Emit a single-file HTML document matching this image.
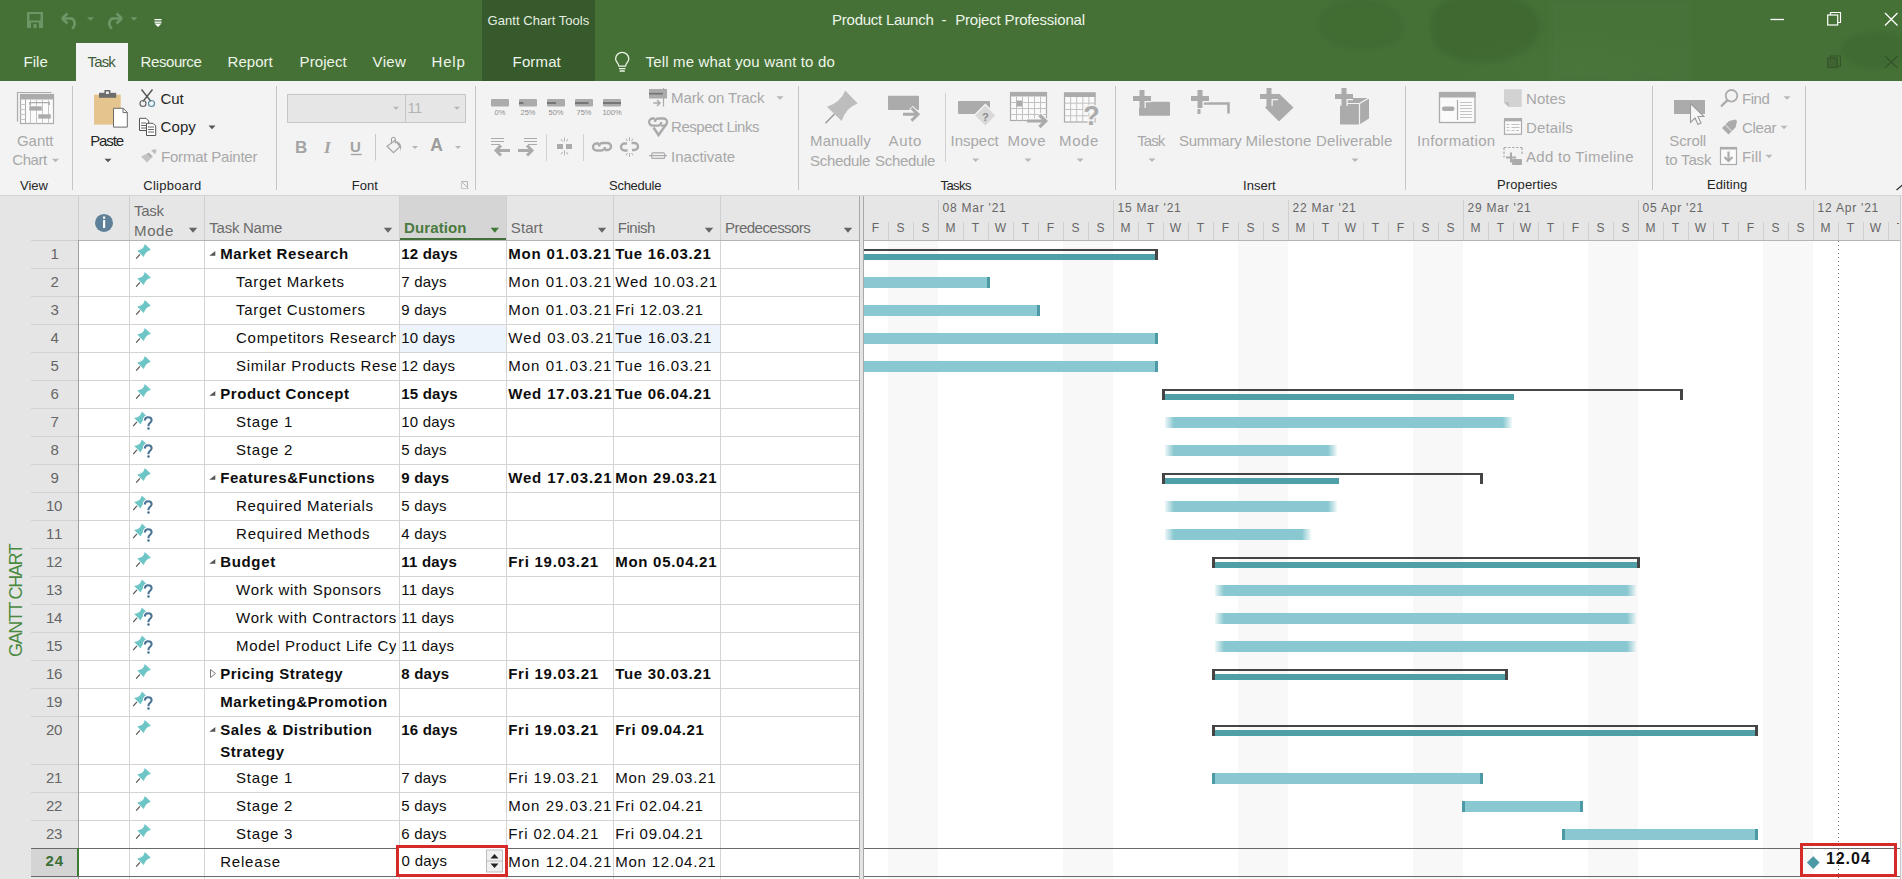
<!DOCTYPE html>
<html><head><meta charset="utf-8"><style>
html,body{margin:0;padding:0;}
body{width:1902px;height:879px;overflow:hidden;position:relative;background:#fff;font-family:'Liberation Sans', sans-serif;}
.t{position:absolute;white-space:pre;}
svg{position:absolute;overflow:visible;}
</style></head><body>
<div style="position:absolute;left:0px;top:0px;width:1902px;height:81px;background:#457136;"></div>
<div style="position:absolute;left:1319px;top:0px;width:84px;height:48px;border-radius:45% 50% 40% 45%;background:rgba(45,85,35,0.17);filter:blur(2px)"></div>
<div style="position:absolute;left:1431px;top:-6px;width:108px;height:68px;border-radius:40% 45% 50% 45%;background:rgba(45,85,35,0.26);filter:blur(2px)"></div>
<div style="position:absolute;left:1551px;top:0px;width:140px;height:81px;background:rgba(120,160,100,0.06);filter:blur(3px)"></div>
<div style="position:absolute;left:1842px;top:32px;width:70px;height:36px;border-radius:50%;background:rgba(45,85,35,0.2);filter:blur(2px)"></div>
<div style="position:absolute;left:1280px;top:0px;width:622px;height:81px;background:radial-gradient(ellipse 200px 60px at 300px 70px, rgba(110,150,90,0.08), transparent 70%)"></div>
<div style="position:absolute;left:482px;top:0px;width:113px;height:81px;background:#365a2c;"></div>
<div style="position:absolute;left:76px;top:43px;width:52px;height:38px;background:#f3f3f3;"></div>
<div style="position:absolute;left:0px;top:81px;width:1902px;height:114px;background:#f3f3f3;"></div>
<div style="position:absolute;left:0px;top:195px;width:1902px;height:1px;background:#d4d4d4;"></div>
<div style="position:absolute;left:72px;top:86px;width:1px;height:104px;background:#c6c6c6;"></div>
<div style="position:absolute;left:276px;top:86px;width:1px;height:104px;background:#c6c6c6;"></div>
<div style="position:absolute;left:475px;top:86px;width:1px;height:104px;background:#c6c6c6;"></div>
<div style="position:absolute;left:798px;top:86px;width:1px;height:104px;background:#c6c6c6;"></div>
<div style="position:absolute;left:1115px;top:86px;width:1px;height:104px;background:#c6c6c6;"></div>
<div style="position:absolute;left:1405px;top:86px;width:1px;height:104px;background:#c6c6c6;"></div>
<div style="position:absolute;left:1652px;top:86px;width:1px;height:104px;background:#c6c6c6;"></div>
<div style="position:absolute;left:1805px;top:86px;width:1px;height:104px;background:#c6c6c6;"></div>
<div style="position:absolute;left:945px;top:93px;width:1px;height:69px;background:#d0d0d0;"></div>
<div style="position:absolute;left:0px;top:196px;width:1902px;height:683px;background:#e5e5e5;"></div>
<div style="position:absolute;left:78px;top:196px;width:782px;height:44px;background:#e6e6e6;"></div>
<div style="position:absolute;left:399px;top:196px;width:107px;height:44px;background:#d5d5d5;"></div>
<div style="position:absolute;left:399px;top:238px;width:107px;height:2px;background:#41703a;"></div>
<div style="position:absolute;left:864px;top:196px;width:1036px;height:44px;background:#e6e6e6;"></div>
<div style="position:absolute;left:79px;top:240px;width:780px;height:639px;background:#ffffff;"></div>
<div style="position:absolute;left:864px;top:240px;width:1036px;height:639px;background:#ffffff;"></div>
<div style="position:absolute;left:859px;top:196px;width:5px;height:683px;background:#e4e4e4;"></div>
<div style="position:absolute;left:859px;top:196px;width:1px;height:683px;background:#a8a8a8;"></div>
<div style="position:absolute;left:863px;top:196px;width:1px;height:683px;background:#a8a8a8;"></div>
<div style="position:absolute;left:1900px;top:196px;width:2px;height:683px;background:#f0f0f0;"></div>
<div style="position:absolute;left:1900px;top:196px;width:1px;height:683px;background:#c8c8c8;"></div>
<div style="position:absolute;left:31px;top:240px;width:47px;height:1px;background:#d0d0d0;"></div>
<div style="position:absolute;left:78px;top:240px;width:781px;height:1px;background:#b4b4b4;"></div>
<div style="position:absolute;left:864px;top:240px;width:1036px;height:1px;background:#b4b4b4;"></div>
<div style="position:absolute;left:888px;top:241px;width:50px;height:638px;background:#f8f8f8;"></div>
<div style="position:absolute;left:1063px;top:241px;width:50px;height:638px;background:#f8f8f8;"></div>
<div style="position:absolute;left:1238px;top:241px;width:50px;height:638px;background:#f8f8f8;"></div>
<div style="position:absolute;left:1413px;top:241px;width:50px;height:638px;background:#f8f8f8;"></div>
<div style="position:absolute;left:1588px;top:241px;width:50px;height:638px;background:#f8f8f8;"></div>
<div style="position:absolute;left:1763px;top:241px;width:50px;height:638px;background:#f8f8f8;"></div>
<div style="position:absolute;left:400px;top:325px;width:106px;height:27px;background:#eef4fb;"></div>
<div style="position:absolute;left:614px;top:325px;width:106px;height:27px;background:#eef4fb;"></div>
<div style="position:absolute;left:78px;top:196px;width:1px;height:44px;background:#cfcfcf;"></div>
<div style="position:absolute;left:129px;top:196px;width:1px;height:44px;background:#cfcfcf;"></div>
<div style="position:absolute;left:204px;top:196px;width:1px;height:44px;background:#cfcfcf;"></div>
<div style="position:absolute;left:399px;top:196px;width:1px;height:44px;background:#cfcfcf;"></div>
<div style="position:absolute;left:506px;top:196px;width:1px;height:44px;background:#cfcfcf;"></div>
<div style="position:absolute;left:613px;top:196px;width:1px;height:44px;background:#cfcfcf;"></div>
<div style="position:absolute;left:720px;top:196px;width:1px;height:44px;background:#cfcfcf;"></div>
<div style="position:absolute;left:78px;top:240px;width:1px;height:639px;background:#a0a0a0;"></div>
<div style="position:absolute;left:129px;top:241px;width:1px;height:638px;background:#d4d4d4;"></div>
<div style="position:absolute;left:204px;top:241px;width:1px;height:638px;background:#d4d4d4;"></div>
<div style="position:absolute;left:399px;top:241px;width:1px;height:638px;background:#d4d4d4;"></div>
<div style="position:absolute;left:506px;top:241px;width:1px;height:638px;background:#d4d4d4;"></div>
<div style="position:absolute;left:613px;top:241px;width:1px;height:638px;background:#d4d4d4;"></div>
<div style="position:absolute;left:720px;top:241px;width:1px;height:638px;background:#d4d4d4;"></div>
<div style="position:absolute;left:31px;top:268px;width:47px;height:1px;background:#d2d2d2;"></div>
<div style="position:absolute;left:79px;top:268px;width:780px;height:1px;background:#d4d4d4;"></div>
<div style="position:absolute;left:31px;top:296px;width:47px;height:1px;background:#d2d2d2;"></div>
<div style="position:absolute;left:79px;top:296px;width:780px;height:1px;background:#d4d4d4;"></div>
<div style="position:absolute;left:31px;top:324px;width:47px;height:1px;background:#d2d2d2;"></div>
<div style="position:absolute;left:79px;top:324px;width:780px;height:1px;background:#d4d4d4;"></div>
<div style="position:absolute;left:31px;top:352px;width:47px;height:1px;background:#d2d2d2;"></div>
<div style="position:absolute;left:79px;top:352px;width:780px;height:1px;background:#d4d4d4;"></div>
<div style="position:absolute;left:31px;top:380px;width:47px;height:1px;background:#d2d2d2;"></div>
<div style="position:absolute;left:79px;top:380px;width:780px;height:1px;background:#d4d4d4;"></div>
<div style="position:absolute;left:31px;top:408px;width:47px;height:1px;background:#d2d2d2;"></div>
<div style="position:absolute;left:79px;top:408px;width:780px;height:1px;background:#d4d4d4;"></div>
<div style="position:absolute;left:31px;top:436px;width:47px;height:1px;background:#d2d2d2;"></div>
<div style="position:absolute;left:79px;top:436px;width:780px;height:1px;background:#d4d4d4;"></div>
<div style="position:absolute;left:31px;top:464px;width:47px;height:1px;background:#d2d2d2;"></div>
<div style="position:absolute;left:79px;top:464px;width:780px;height:1px;background:#d4d4d4;"></div>
<div style="position:absolute;left:31px;top:492px;width:47px;height:1px;background:#d2d2d2;"></div>
<div style="position:absolute;left:79px;top:492px;width:780px;height:1px;background:#d4d4d4;"></div>
<div style="position:absolute;left:31px;top:520px;width:47px;height:1px;background:#d2d2d2;"></div>
<div style="position:absolute;left:79px;top:520px;width:780px;height:1px;background:#d4d4d4;"></div>
<div style="position:absolute;left:31px;top:548px;width:47px;height:1px;background:#d2d2d2;"></div>
<div style="position:absolute;left:79px;top:548px;width:780px;height:1px;background:#d4d4d4;"></div>
<div style="position:absolute;left:31px;top:576px;width:47px;height:1px;background:#d2d2d2;"></div>
<div style="position:absolute;left:79px;top:576px;width:780px;height:1px;background:#d4d4d4;"></div>
<div style="position:absolute;left:31px;top:604px;width:47px;height:1px;background:#d2d2d2;"></div>
<div style="position:absolute;left:79px;top:604px;width:780px;height:1px;background:#d4d4d4;"></div>
<div style="position:absolute;left:31px;top:632px;width:47px;height:1px;background:#d2d2d2;"></div>
<div style="position:absolute;left:79px;top:632px;width:780px;height:1px;background:#d4d4d4;"></div>
<div style="position:absolute;left:31px;top:660px;width:47px;height:1px;background:#d2d2d2;"></div>
<div style="position:absolute;left:79px;top:660px;width:780px;height:1px;background:#d4d4d4;"></div>
<div style="position:absolute;left:31px;top:688px;width:47px;height:1px;background:#d2d2d2;"></div>
<div style="position:absolute;left:79px;top:688px;width:780px;height:1px;background:#d4d4d4;"></div>
<div style="position:absolute;left:31px;top:716px;width:47px;height:1px;background:#d2d2d2;"></div>
<div style="position:absolute;left:79px;top:716px;width:780px;height:1px;background:#d4d4d4;"></div>
<div style="position:absolute;left:31px;top:764px;width:47px;height:1px;background:#d2d2d2;"></div>
<div style="position:absolute;left:79px;top:764px;width:780px;height:1px;background:#d4d4d4;"></div>
<div style="position:absolute;left:31px;top:792px;width:47px;height:1px;background:#d2d2d2;"></div>
<div style="position:absolute;left:79px;top:792px;width:780px;height:1px;background:#d4d4d4;"></div>
<div style="position:absolute;left:31px;top:820px;width:47px;height:1px;background:#d2d2d2;"></div>
<div style="position:absolute;left:79px;top:820px;width:780px;height:1px;background:#d4d4d4;"></div>
<div style="position:absolute;left:31px;top:848px;width:47px;height:1px;background:#d2d2d2;"></div>
<div style="position:absolute;left:79px;top:848px;width:780px;height:1px;background:#d4d4d4;"></div>
<div style="position:absolute;left:31px;top:876px;width:47px;height:1px;background:#d2d2d2;"></div>
<div style="position:absolute;left:79px;top:876px;width:780px;height:1px;background:#d4d4d4;"></div>
<div style="position:absolute;left:888px;top:222px;width:1px;height:18px;background:#d0d0d0;"></div>
<div style="position:absolute;left:913px;top:222px;width:1px;height:18px;background:#d0d0d0;"></div>
<div style="position:absolute;left:938px;top:200px;width:1px;height:40px;background:#d0d0d0;"></div>
<div style="position:absolute;left:963px;top:222px;width:1px;height:18px;background:#d0d0d0;"></div>
<div style="position:absolute;left:988px;top:222px;width:1px;height:18px;background:#d0d0d0;"></div>
<div style="position:absolute;left:1013px;top:222px;width:1px;height:18px;background:#d0d0d0;"></div>
<div style="position:absolute;left:1038px;top:222px;width:1px;height:18px;background:#d0d0d0;"></div>
<div style="position:absolute;left:1063px;top:222px;width:1px;height:18px;background:#d0d0d0;"></div>
<div style="position:absolute;left:1088px;top:222px;width:1px;height:18px;background:#d0d0d0;"></div>
<div style="position:absolute;left:1113px;top:200px;width:1px;height:40px;background:#d0d0d0;"></div>
<div style="position:absolute;left:1138px;top:222px;width:1px;height:18px;background:#d0d0d0;"></div>
<div style="position:absolute;left:1163px;top:222px;width:1px;height:18px;background:#d0d0d0;"></div>
<div style="position:absolute;left:1188px;top:222px;width:1px;height:18px;background:#d0d0d0;"></div>
<div style="position:absolute;left:1213px;top:222px;width:1px;height:18px;background:#d0d0d0;"></div>
<div style="position:absolute;left:1238px;top:222px;width:1px;height:18px;background:#d0d0d0;"></div>
<div style="position:absolute;left:1263px;top:222px;width:1px;height:18px;background:#d0d0d0;"></div>
<div style="position:absolute;left:1288px;top:200px;width:1px;height:40px;background:#d0d0d0;"></div>
<div style="position:absolute;left:1313px;top:222px;width:1px;height:18px;background:#d0d0d0;"></div>
<div style="position:absolute;left:1338px;top:222px;width:1px;height:18px;background:#d0d0d0;"></div>
<div style="position:absolute;left:1363px;top:222px;width:1px;height:18px;background:#d0d0d0;"></div>
<div style="position:absolute;left:1388px;top:222px;width:1px;height:18px;background:#d0d0d0;"></div>
<div style="position:absolute;left:1413px;top:222px;width:1px;height:18px;background:#d0d0d0;"></div>
<div style="position:absolute;left:1438px;top:222px;width:1px;height:18px;background:#d0d0d0;"></div>
<div style="position:absolute;left:1463px;top:200px;width:1px;height:40px;background:#d0d0d0;"></div>
<div style="position:absolute;left:1488px;top:222px;width:1px;height:18px;background:#d0d0d0;"></div>
<div style="position:absolute;left:1513px;top:222px;width:1px;height:18px;background:#d0d0d0;"></div>
<div style="position:absolute;left:1538px;top:222px;width:1px;height:18px;background:#d0d0d0;"></div>
<div style="position:absolute;left:1563px;top:222px;width:1px;height:18px;background:#d0d0d0;"></div>
<div style="position:absolute;left:1588px;top:222px;width:1px;height:18px;background:#d0d0d0;"></div>
<div style="position:absolute;left:1613px;top:222px;width:1px;height:18px;background:#d0d0d0;"></div>
<div style="position:absolute;left:1638px;top:200px;width:1px;height:40px;background:#d0d0d0;"></div>
<div style="position:absolute;left:1663px;top:222px;width:1px;height:18px;background:#d0d0d0;"></div>
<div style="position:absolute;left:1688px;top:222px;width:1px;height:18px;background:#d0d0d0;"></div>
<div style="position:absolute;left:1713px;top:222px;width:1px;height:18px;background:#d0d0d0;"></div>
<div style="position:absolute;left:1738px;top:222px;width:1px;height:18px;background:#d0d0d0;"></div>
<div style="position:absolute;left:1763px;top:222px;width:1px;height:18px;background:#d0d0d0;"></div>
<div style="position:absolute;left:1788px;top:222px;width:1px;height:18px;background:#d0d0d0;"></div>
<div style="position:absolute;left:1813px;top:200px;width:1px;height:40px;background:#d0d0d0;"></div>
<div style="position:absolute;left:1838px;top:222px;width:1px;height:18px;background:#d0d0d0;"></div>
<div style="position:absolute;left:1863px;top:222px;width:1px;height:18px;background:#d0d0d0;"></div>
<div style="position:absolute;left:1888px;top:222px;width:1px;height:18px;background:#d0d0d0;"></div>
<div class="t" style="left:863px;top:220px;width:25px;text-align:center;font-size:12px;line-height:16px;color:#666666;">F</div>
<div class="t" style="left:888px;top:220px;width:25px;text-align:center;font-size:12px;line-height:16px;color:#666666;">S</div>
<div class="t" style="left:913px;top:220px;width:25px;text-align:center;font-size:12px;line-height:16px;color:#666666;">S</div>
<div class="t" style="left:938px;top:220px;width:25px;text-align:center;font-size:12px;line-height:16px;color:#666666;">M</div>
<div class="t" style="left:963px;top:220px;width:25px;text-align:center;font-size:12px;line-height:16px;color:#666666;">T</div>
<div class="t" style="left:988px;top:220px;width:25px;text-align:center;font-size:12px;line-height:16px;color:#666666;">W</div>
<div class="t" style="left:1013px;top:220px;width:25px;text-align:center;font-size:12px;line-height:16px;color:#666666;">T</div>
<div class="t" style="left:1038px;top:220px;width:25px;text-align:center;font-size:12px;line-height:16px;color:#666666;">F</div>
<div class="t" style="left:1063px;top:220px;width:25px;text-align:center;font-size:12px;line-height:16px;color:#666666;">S</div>
<div class="t" style="left:1088px;top:220px;width:25px;text-align:center;font-size:12px;line-height:16px;color:#666666;">S</div>
<div class="t" style="left:1113px;top:220px;width:25px;text-align:center;font-size:12px;line-height:16px;color:#666666;">M</div>
<div class="t" style="left:1138px;top:220px;width:25px;text-align:center;font-size:12px;line-height:16px;color:#666666;">T</div>
<div class="t" style="left:1163px;top:220px;width:25px;text-align:center;font-size:12px;line-height:16px;color:#666666;">W</div>
<div class="t" style="left:1188px;top:220px;width:25px;text-align:center;font-size:12px;line-height:16px;color:#666666;">T</div>
<div class="t" style="left:1213px;top:220px;width:25px;text-align:center;font-size:12px;line-height:16px;color:#666666;">F</div>
<div class="t" style="left:1238px;top:220px;width:25px;text-align:center;font-size:12px;line-height:16px;color:#666666;">S</div>
<div class="t" style="left:1263px;top:220px;width:25px;text-align:center;font-size:12px;line-height:16px;color:#666666;">S</div>
<div class="t" style="left:1288px;top:220px;width:25px;text-align:center;font-size:12px;line-height:16px;color:#666666;">M</div>
<div class="t" style="left:1313px;top:220px;width:25px;text-align:center;font-size:12px;line-height:16px;color:#666666;">T</div>
<div class="t" style="left:1338px;top:220px;width:25px;text-align:center;font-size:12px;line-height:16px;color:#666666;">W</div>
<div class="t" style="left:1363px;top:220px;width:25px;text-align:center;font-size:12px;line-height:16px;color:#666666;">T</div>
<div class="t" style="left:1388px;top:220px;width:25px;text-align:center;font-size:12px;line-height:16px;color:#666666;">F</div>
<div class="t" style="left:1413px;top:220px;width:25px;text-align:center;font-size:12px;line-height:16px;color:#666666;">S</div>
<div class="t" style="left:1438px;top:220px;width:25px;text-align:center;font-size:12px;line-height:16px;color:#666666;">S</div>
<div class="t" style="left:1463px;top:220px;width:25px;text-align:center;font-size:12px;line-height:16px;color:#666666;">M</div>
<div class="t" style="left:1488px;top:220px;width:25px;text-align:center;font-size:12px;line-height:16px;color:#666666;">T</div>
<div class="t" style="left:1513px;top:220px;width:25px;text-align:center;font-size:12px;line-height:16px;color:#666666;">W</div>
<div class="t" style="left:1538px;top:220px;width:25px;text-align:center;font-size:12px;line-height:16px;color:#666666;">T</div>
<div class="t" style="left:1563px;top:220px;width:25px;text-align:center;font-size:12px;line-height:16px;color:#666666;">F</div>
<div class="t" style="left:1588px;top:220px;width:25px;text-align:center;font-size:12px;line-height:16px;color:#666666;">S</div>
<div class="t" style="left:1613px;top:220px;width:25px;text-align:center;font-size:12px;line-height:16px;color:#666666;">S</div>
<div class="t" style="left:1638px;top:220px;width:25px;text-align:center;font-size:12px;line-height:16px;color:#666666;">M</div>
<div class="t" style="left:1663px;top:220px;width:25px;text-align:center;font-size:12px;line-height:16px;color:#666666;">T</div>
<div class="t" style="left:1688px;top:220px;width:25px;text-align:center;font-size:12px;line-height:16px;color:#666666;">W</div>
<div class="t" style="left:1713px;top:220px;width:25px;text-align:center;font-size:12px;line-height:16px;color:#666666;">T</div>
<div class="t" style="left:1738px;top:220px;width:25px;text-align:center;font-size:12px;line-height:16px;color:#666666;">F</div>
<div class="t" style="left:1763px;top:220px;width:25px;text-align:center;font-size:12px;line-height:16px;color:#666666;">S</div>
<div class="t" style="left:1788px;top:220px;width:25px;text-align:center;font-size:12px;line-height:16px;color:#666666;">S</div>
<div class="t" style="left:1813px;top:220px;width:25px;text-align:center;font-size:12px;line-height:16px;color:#666666;">M</div>
<div class="t" style="left:1838px;top:220px;width:25px;text-align:center;font-size:12px;line-height:16px;color:#666666;">T</div>
<div class="t" style="left:1863px;top:220px;width:25px;text-align:center;font-size:12px;line-height:16px;color:#666666;">W</div>
<div class="t" style="left:1888px;top:220px;width:25px;text-align:center;font-size:12px;line-height:16px;color:#666666;clip-path:inset(0 14px 0 0);">T</div>
<div style="position:absolute;left:31px;top:848px;width:47px;height:28px;background:#d4d4d4;"></div>
<div style="position:absolute;left:31px;top:848px;width:1869px;height:1px;background:#6a6a6a;"></div>
<div style="position:absolute;left:31px;top:876px;width:1869px;height:1px;background:#6a6a6a;"></div>
<div style="position:absolute;left:77px;top:848px;width:2px;height:28px;background:#3d7a34;"></div>
<div style="position:absolute;left:859px;top:848px;width:5px;height:29px;background:#e4e4e4;"></div>
<div style="position:absolute;left:859px;top:848px;width:1px;height:31px;background:#a8a8a8;"></div>
<div style="position:absolute;left:863px;top:848px;width:1px;height:31px;background:#a8a8a8;"></div>
<div style="position:absolute;left:864px;top:249px;width:294px;height:2px;background:#454545;"></div>
<div style="position:absolute;left:864px;top:254px;width:294px;height:6px;background:#4f9fa7;"></div>
<div style="position:absolute;left:1155px;top:249px;width:3px;height:11px;background:#454545;"></div>
<div style="position:absolute;left:864px;top:277px;width:126px;height:11px;background:#89c8d0;"></div>
<div style="position:absolute;left:987px;top:277px;width:3px;height:11px;background:#4d99a5;"></div>
<div style="position:absolute;left:864px;top:305px;width:176px;height:11px;background:#89c8d0;"></div>
<div style="position:absolute;left:1037px;top:305px;width:3px;height:11px;background:#4d99a5;"></div>
<div style="position:absolute;left:864px;top:333px;width:294px;height:11px;background:#89c8d0;"></div>
<div style="position:absolute;left:1155px;top:333px;width:3px;height:11px;background:#4d99a5;"></div>
<div style="position:absolute;left:864px;top:361px;width:294px;height:11px;background:#89c8d0;"></div>
<div style="position:absolute;left:1155px;top:361px;width:3px;height:11px;background:#4d99a5;"></div>
<div style="position:absolute;left:1162px;top:389px;width:521px;height:2px;background:#454545;"></div>
<div style="position:absolute;left:1162px;top:394px;width:352px;height:6px;background:#4f9fa7;"></div>
<div style="position:absolute;left:1162px;top:389px;width:3px;height:11px;background:#454545;"></div>
<div style="position:absolute;left:1680px;top:389px;width:3px;height:11px;background:#454545;"></div>
<div style="position:absolute;left:1165px;top:417px;width:347px;height:11px;background:linear-gradient(90deg, rgba(137,200,208,0.15) 0px, rgba(137,200,208,1) 9px, rgba(137,200,208,1) calc(100% - 9px), rgba(137,200,208,0.1) 100%);"></div>
<div style="position:absolute;left:1165px;top:445px;width:172px;height:11px;background:linear-gradient(90deg, rgba(137,200,208,0.15) 0px, rgba(137,200,208,1) 9px, rgba(137,200,208,1) calc(100% - 9px), rgba(137,200,208,0.1) 100%);"></div>
<div style="position:absolute;left:1162px;top:473px;width:321px;height:2px;background:#454545;"></div>
<div style="position:absolute;left:1162px;top:478px;width:177px;height:6px;background:#4f9fa7;"></div>
<div style="position:absolute;left:1162px;top:473px;width:3px;height:11px;background:#454545;"></div>
<div style="position:absolute;left:1480px;top:473px;width:3px;height:11px;background:#454545;"></div>
<div style="position:absolute;left:1165px;top:501px;width:172px;height:11px;background:linear-gradient(90deg, rgba(137,200,208,0.15) 0px, rgba(137,200,208,1) 9px, rgba(137,200,208,1) calc(100% - 9px), rgba(137,200,208,0.1) 100%);"></div>
<div style="position:absolute;left:1165px;top:529px;width:146px;height:11px;background:linear-gradient(90deg, rgba(137,200,208,0.15) 0px, rgba(137,200,208,1) 9px, rgba(137,200,208,1) calc(100% - 9px), rgba(137,200,208,0.1) 100%);"></div>
<div style="position:absolute;left:1212px;top:557px;width:428px;height:2px;background:#454545;"></div>
<div style="position:absolute;left:1212px;top:562px;width:428px;height:6px;background:#4f9fa7;"></div>
<div style="position:absolute;left:1212px;top:557px;width:3px;height:11px;background:#454545;"></div>
<div style="position:absolute;left:1637px;top:557px;width:3px;height:11px;background:#454545;"></div>
<div style="position:absolute;left:1215px;top:585px;width:421px;height:11px;background:linear-gradient(90deg, rgba(137,200,208,0.15) 0px, rgba(137,200,208,1) 9px, rgba(137,200,208,1) calc(100% - 9px), rgba(137,200,208,0.1) 100%);"></div>
<div style="position:absolute;left:1215px;top:613px;width:421px;height:11px;background:linear-gradient(90deg, rgba(137,200,208,0.15) 0px, rgba(137,200,208,1) 9px, rgba(137,200,208,1) calc(100% - 9px), rgba(137,200,208,0.1) 100%);"></div>
<div style="position:absolute;left:1215px;top:641px;width:421px;height:11px;background:linear-gradient(90deg, rgba(137,200,208,0.15) 0px, rgba(137,200,208,1) 9px, rgba(137,200,208,1) calc(100% - 9px), rgba(137,200,208,0.1) 100%);"></div>
<div style="position:absolute;left:1212px;top:669px;width:296px;height:2px;background:#454545;"></div>
<div style="position:absolute;left:1212px;top:674px;width:296px;height:6px;background:#4f9fa7;"></div>
<div style="position:absolute;left:1212px;top:669px;width:3px;height:11px;background:#454545;"></div>
<div style="position:absolute;left:1505px;top:669px;width:3px;height:11px;background:#454545;"></div>
<div style="position:absolute;left:1212px;top:725px;width:546px;height:2px;background:#454545;"></div>
<div style="position:absolute;left:1212px;top:730px;width:546px;height:6px;background:#4f9fa7;"></div>
<div style="position:absolute;left:1212px;top:725px;width:3px;height:11px;background:#454545;"></div>
<div style="position:absolute;left:1755px;top:725px;width:3px;height:11px;background:#454545;"></div>
<div style="position:absolute;left:1212px;top:773px;width:271px;height:11px;background:#89c8d0;"></div>
<div style="position:absolute;left:1212px;top:773px;width:3px;height:11px;background:#4d99a5;"></div>
<div style="position:absolute;left:1480px;top:773px;width:3px;height:11px;background:#4d99a5;"></div>
<div style="position:absolute;left:1462px;top:801px;width:121px;height:11px;background:#89c8d0;"></div>
<div style="position:absolute;left:1462px;top:801px;width:3px;height:11px;background:#4d99a5;"></div>
<div style="position:absolute;left:1580px;top:801px;width:3px;height:11px;background:#4d99a5;"></div>
<div style="position:absolute;left:1562px;top:829px;width:196px;height:11px;background:#89c8d0;"></div>
<div style="position:absolute;left:1562px;top:829px;width:3px;height:11px;background:#4d99a5;"></div>
<div style="position:absolute;left:1755px;top:829px;width:3px;height:11px;background:#4d99a5;"></div>
<div style="position:absolute;left:1838px;top:241px;width:1px;height:638px;background:repeating-linear-gradient(180deg,#555 0px,#555 1px,transparent 1px,transparent 4px);opacity:0.8"></div>
<div style="position:absolute;left:1809.2px;top:857.7px;width:8.5px;height:8.5px;background:#4d99a5;transform:rotate(45deg);"></div>
<div style="position:absolute;left:1800px;top:843px;width:91px;height:28px;border:3px solid #d42a2a;"></div>
<div style="position:absolute;left:396px;top:845px;width:106px;height:26px;border:3px solid #d42a2a;background:#fff"></div>
<svg style="left:0;top:0" width="1902" height="879" viewBox="0 0 1902 879"><g transform="translate(130 240)"><path d="M9.9 14.3L6.2 18.6" stroke="#555" stroke-width="1.2"/><path d="M14.8 4.1L20.9 9.7Q15.6 11.2 13.7 16.9L7.2 10.5Q13.6 9.8 14.8 4.1Z" fill="#6ec5c6"/></g><path d="M209.3 255.8L215.3 251V255.8Z" fill="#555"/><g transform="translate(130 268)"><path d="M9.9 14.3L6.2 18.6" stroke="#555" stroke-width="1.2"/><path d="M14.8 4.1L20.9 9.7Q15.6 11.2 13.7 16.9L7.2 10.5Q13.6 9.8 14.8 4.1Z" fill="#6ec5c6"/></g><g transform="translate(130 296)"><path d="M9.9 14.3L6.2 18.6" stroke="#555" stroke-width="1.2"/><path d="M14.8 4.1L20.9 9.7Q15.6 11.2 13.7 16.9L7.2 10.5Q13.6 9.8 14.8 4.1Z" fill="#6ec5c6"/></g><g transform="translate(130 324)"><path d="M9.9 14.3L6.2 18.6" stroke="#555" stroke-width="1.2"/><path d="M14.8 4.1L20.9 9.7Q15.6 11.2 13.7 16.9L7.2 10.5Q13.6 9.8 14.8 4.1Z" fill="#6ec5c6"/></g><g transform="translate(130 352)"><path d="M9.9 14.3L6.2 18.6" stroke="#555" stroke-width="1.2"/><path d="M14.8 4.1L20.9 9.7Q15.6 11.2 13.7 16.9L7.2 10.5Q13.6 9.8 14.8 4.1Z" fill="#6ec5c6"/></g><g transform="translate(130 380)"><path d="M9.9 14.3L6.2 18.6" stroke="#555" stroke-width="1.2"/><path d="M14.8 4.1L20.9 9.7Q15.6 11.2 13.7 16.9L7.2 10.5Q13.6 9.8 14.8 4.1Z" fill="#6ec5c6"/></g><path d="M209.3 395.8L215.3 391V395.8Z" fill="#555"/><g transform="translate(127 407.5)"><path d="M9.9 14.3L6.2 18.6" stroke="#555" stroke-width="1.2"/><path d="M14.8 4.1L20.9 9.7Q15.6 11.2 13.7 16.9L7.2 10.5Q13.6 9.8 14.8 4.1Z" fill="#6ec5c6"/></g><path d="M144.9 420.6C144.9 418.3 146.4 417.2 148.2 417.2C150.2 417.2 151.6 418.4 151.6 420.2C151.6 422.4 148.5 423 148.5 425.3V426.2" fill="none" stroke="#fff" stroke-width="4"/><path d="M144.9 420.6C144.9 418.3 146.4 417.2 148.2 417.2C150.2 417.2 151.6 418.4 151.6 420.2C151.6 422.4 148.5 423 148.5 425.3V426.2" fill="none" stroke="#4a7494" stroke-width="2.1"/><circle cx="148.5" cy="428.5" r="1.3" fill="#4a7494"/><g transform="translate(127 435.5)"><path d="M9.9 14.3L6.2 18.6" stroke="#555" stroke-width="1.2"/><path d="M14.8 4.1L20.9 9.7Q15.6 11.2 13.7 16.9L7.2 10.5Q13.6 9.8 14.8 4.1Z" fill="#6ec5c6"/></g><path d="M144.9 448.6C144.9 446.3 146.4 445.2 148.2 445.2C150.2 445.2 151.6 446.4 151.6 448.2C151.6 450.4 148.5 451 148.5 453.3V454.2" fill="none" stroke="#fff" stroke-width="4"/><path d="M144.9 448.6C144.9 446.3 146.4 445.2 148.2 445.2C150.2 445.2 151.6 446.4 151.6 448.2C151.6 450.4 148.5 451 148.5 453.3V454.2" fill="none" stroke="#4a7494" stroke-width="2.1"/><circle cx="148.5" cy="456.5" r="1.3" fill="#4a7494"/><g transform="translate(130 464)"><path d="M9.9 14.3L6.2 18.6" stroke="#555" stroke-width="1.2"/><path d="M14.8 4.1L20.9 9.7Q15.6 11.2 13.7 16.9L7.2 10.5Q13.6 9.8 14.8 4.1Z" fill="#6ec5c6"/></g><path d="M209.3 479.8L215.3 475V479.8Z" fill="#555"/><g transform="translate(127 491.5)"><path d="M9.9 14.3L6.2 18.6" stroke="#555" stroke-width="1.2"/><path d="M14.8 4.1L20.9 9.7Q15.6 11.2 13.7 16.9L7.2 10.5Q13.6 9.8 14.8 4.1Z" fill="#6ec5c6"/></g><path d="M144.9 504.6C144.9 502.3 146.4 501.2 148.2 501.2C150.2 501.2 151.6 502.4 151.6 504.2C151.6 506.4 148.5 507 148.5 509.3V510.2" fill="none" stroke="#fff" stroke-width="4"/><path d="M144.9 504.6C144.9 502.3 146.4 501.2 148.2 501.2C150.2 501.2 151.6 502.4 151.6 504.2C151.6 506.4 148.5 507 148.5 509.3V510.2" fill="none" stroke="#4a7494" stroke-width="2.1"/><circle cx="148.5" cy="512.5" r="1.3" fill="#4a7494"/><g transform="translate(127 519.5)"><path d="M9.9 14.3L6.2 18.6" stroke="#555" stroke-width="1.2"/><path d="M14.8 4.1L20.9 9.7Q15.6 11.2 13.7 16.9L7.2 10.5Q13.6 9.8 14.8 4.1Z" fill="#6ec5c6"/></g><path d="M144.9 532.6C144.9 530.3 146.4 529.2 148.2 529.2C150.2 529.2 151.6 530.4 151.6 532.2C151.6 534.4 148.5 535 148.5 537.3V538.2" fill="none" stroke="#fff" stroke-width="4"/><path d="M144.9 532.6C144.9 530.3 146.4 529.2 148.2 529.2C150.2 529.2 151.6 530.4 151.6 532.2C151.6 534.4 148.5 535 148.5 537.3V538.2" fill="none" stroke="#4a7494" stroke-width="2.1"/><circle cx="148.5" cy="540.5" r="1.3" fill="#4a7494"/><g transform="translate(130 548)"><path d="M9.9 14.3L6.2 18.6" stroke="#555" stroke-width="1.2"/><path d="M14.8 4.1L20.9 9.7Q15.6 11.2 13.7 16.9L7.2 10.5Q13.6 9.8 14.8 4.1Z" fill="#6ec5c6"/></g><path d="M209.3 563.8L215.3 559V563.8Z" fill="#555"/><g transform="translate(127 575.5)"><path d="M9.9 14.3L6.2 18.6" stroke="#555" stroke-width="1.2"/><path d="M14.8 4.1L20.9 9.7Q15.6 11.2 13.7 16.9L7.2 10.5Q13.6 9.8 14.8 4.1Z" fill="#6ec5c6"/></g><path d="M144.9 588.6C144.9 586.3 146.4 585.2 148.2 585.2C150.2 585.2 151.6 586.4 151.6 588.2C151.6 590.4 148.5 591 148.5 593.3V594.2" fill="none" stroke="#fff" stroke-width="4"/><path d="M144.9 588.6C144.9 586.3 146.4 585.2 148.2 585.2C150.2 585.2 151.6 586.4 151.6 588.2C151.6 590.4 148.5 591 148.5 593.3V594.2" fill="none" stroke="#4a7494" stroke-width="2.1"/><circle cx="148.5" cy="596.5" r="1.3" fill="#4a7494"/><g transform="translate(127 603.5)"><path d="M9.9 14.3L6.2 18.6" stroke="#555" stroke-width="1.2"/><path d="M14.8 4.1L20.9 9.7Q15.6 11.2 13.7 16.9L7.2 10.5Q13.6 9.8 14.8 4.1Z" fill="#6ec5c6"/></g><path d="M144.9 616.6C144.9 614.3 146.4 613.2 148.2 613.2C150.2 613.2 151.6 614.4 151.6 616.2C151.6 618.4 148.5 619 148.5 621.3V622.2" fill="none" stroke="#fff" stroke-width="4"/><path d="M144.9 616.6C144.9 614.3 146.4 613.2 148.2 613.2C150.2 613.2 151.6 614.4 151.6 616.2C151.6 618.4 148.5 619 148.5 621.3V622.2" fill="none" stroke="#4a7494" stroke-width="2.1"/><circle cx="148.5" cy="624.5" r="1.3" fill="#4a7494"/><g transform="translate(127 631.5)"><path d="M9.9 14.3L6.2 18.6" stroke="#555" stroke-width="1.2"/><path d="M14.8 4.1L20.9 9.7Q15.6 11.2 13.7 16.9L7.2 10.5Q13.6 9.8 14.8 4.1Z" fill="#6ec5c6"/></g><path d="M144.9 644.6C144.9 642.3 146.4 641.2 148.2 641.2C150.2 641.2 151.6 642.4 151.6 644.2C151.6 646.4 148.5 647 148.5 649.3V650.2" fill="none" stroke="#fff" stroke-width="4"/><path d="M144.9 644.6C144.9 642.3 146.4 641.2 148.2 641.2C150.2 641.2 151.6 642.4 151.6 644.2C151.6 646.4 148.5 647 148.5 649.3V650.2" fill="none" stroke="#4a7494" stroke-width="2.1"/><circle cx="148.5" cy="652.5" r="1.3" fill="#4a7494"/><g transform="translate(130 660)"><path d="M9.9 14.3L6.2 18.6" stroke="#555" stroke-width="1.2"/><path d="M14.8 4.1L20.9 9.7Q15.6 11.2 13.7 16.9L7.2 10.5Q13.6 9.8 14.8 4.1Z" fill="#6ec5c6"/></g><path d="M210.5 669.5L215.5 673.5L210.5 677.5Z" fill="none" stroke="#777" stroke-width="1"/><g transform="translate(127 687.5)"><path d="M9.9 14.3L6.2 18.6" stroke="#555" stroke-width="1.2"/><path d="M14.8 4.1L20.9 9.7Q15.6 11.2 13.7 16.9L7.2 10.5Q13.6 9.8 14.8 4.1Z" fill="#6ec5c6"/></g><path d="M144.9 700.6C144.9 698.3 146.4 697.2 148.2 697.2C150.2 697.2 151.6 698.4 151.6 700.2C151.6 702.4 148.5 703 148.5 705.3V706.2" fill="none" stroke="#fff" stroke-width="4"/><path d="M144.9 700.6C144.9 698.3 146.4 697.2 148.2 697.2C150.2 697.2 151.6 698.4 151.6 700.2C151.6 702.4 148.5 703 148.5 705.3V706.2" fill="none" stroke="#4a7494" stroke-width="2.1"/><circle cx="148.5" cy="708.5" r="1.3" fill="#4a7494"/><g transform="translate(130 716)"><path d="M9.9 14.3L6.2 18.6" stroke="#555" stroke-width="1.2"/><path d="M14.8 4.1L20.9 9.7Q15.6 11.2 13.7 16.9L7.2 10.5Q13.6 9.8 14.8 4.1Z" fill="#6ec5c6"/></g><path d="M209.3 731.8L215.3 727V731.8Z" fill="#555"/><g transform="translate(130 764)"><path d="M9.9 14.3L6.2 18.6" stroke="#555" stroke-width="1.2"/><path d="M14.8 4.1L20.9 9.7Q15.6 11.2 13.7 16.9L7.2 10.5Q13.6 9.8 14.8 4.1Z" fill="#6ec5c6"/></g><g transform="translate(130 792)"><path d="M9.9 14.3L6.2 18.6" stroke="#555" stroke-width="1.2"/><path d="M14.8 4.1L20.9 9.7Q15.6 11.2 13.7 16.9L7.2 10.5Q13.6 9.8 14.8 4.1Z" fill="#6ec5c6"/></g><g transform="translate(130 820)"><path d="M9.9 14.3L6.2 18.6" stroke="#555" stroke-width="1.2"/><path d="M14.8 4.1L20.9 9.7Q15.6 11.2 13.7 16.9L7.2 10.5Q13.6 9.8 14.8 4.1Z" fill="#6ec5c6"/></g><g transform="translate(130 848)"><path d="M9.9 14.3L6.2 18.6" stroke="#555" stroke-width="1.2"/><path d="M14.8 4.1L20.9 9.7Q15.6 11.2 13.7 16.9L7.2 10.5Q13.6 9.8 14.8 4.1Z" fill="#6ec5c6"/></g><circle cx="104" cy="222.9" r="9" fill="#5e8199"/><rect x="103" y="220" width="2.2" height="8" fill="#fff"/><rect x="103" y="216.5" width="2.2" height="2.2" fill="#fff"/><path d="M188.8 227.8h8.4l-4.2 5z" fill="#666"/><path d="M383.8 227.8h8.4l-4.2 5z" fill="#666"/><path d="M490.6 227.8h8.4l-4.2 5z" fill="#3f7a36"/><path d="M597.8 227.8h8.4l-4.2 5z" fill="#666"/><path d="M704.8 227.8h8.4l-4.2 5z" fill="#666"/><path d="M843.8 227.8h8.4l-4.2 5z" fill="#666"/><rect x="486.5" y="850" width="16" height="22" fill="#f0f0f0" stroke="#bdbdbd" stroke-width="1"/><path d="M487 861h15" stroke="#bdbdbd"/><path d="M490.5 858.5h8l-4 -4.5z" fill="#222"/><path d="M490.5 863.5h8l-4 4.5z" fill="#222"/></svg>
<div class="t" style="left:7px;top:657px;font-size:18px;line-height:18px;letter-spacing:-1.35px;color:#4a8a3f;transform:rotate(-90deg);transform-origin:0 0;">GANTT CHART</div>
<svg style="left:0;top:0" width="1902" height="200" viewBox="0 0 1902 200"><rect x="27" y="12" width="16" height="16" fill="#6e9565"/><rect x="29.5" y="14" width="11" height="6.5" fill="#457136"/><rect x="31" y="22.5" width="8" height="5.5" fill="#457136"/><rect x="33.5" y="24" width="3" height="4" fill="#6e9565"/><path d="M62 18.5 L67.5 13.5 M62 18.5 L67.5 23.5 M62.5 18.5 H72 A6 6 0 0 1 72 28.5" fill="none" stroke="#6e9565" stroke-width="2.6"/><path d="M122 18.5 L116.5 13.5 M122 18.5 L116.5 23.5 M121.5 18.5 H112 A6 6 0 0 0 112 28.5" fill="none" stroke="#6e9565" stroke-width="2.6"/><path d="M87.0 17.25h7l-3.5 3.5z" fill="#6e9565"/><path d="M130.5 17.25h7l-3.5 3.5z" fill="#6e9565"/><rect x="154.5" y="19" width="7" height="1.3" fill="#fff"/><rect x="154.5" y="21.5" width="7" height="1.3" fill="#fff"/><path d="M154.5 23.5h7l-3.5 3.5z" fill="#fff"/><path d="M618.9 66.2C618.9 63.3 615.6 61.8 615.6 58.9A6.6 6.6 0 0 1 628.8 58.9C628.8 61.8 625.5 63.3 625.5 66.2Z" fill="none" stroke="#eef5ea" stroke-width="1.3"/><path d="M619 68.6h6.4M619.6 71h5.2" stroke="#eef5ea" stroke-width="1.3"/><path d="M1770.5 19.5h13.5" stroke="#fff" stroke-width="1.3"/><rect x="1827.7" y="15" width="10" height="10" fill="none" stroke="#fff" stroke-width="1.2"/><path d="M1830.5 15V12.5h10v10H1837.7" fill="none" stroke="#fff" stroke-width="1.2"/><path d="M1885 13L1897.5 25.5M1897.5 13L1885 25.5" stroke="#fff" stroke-width="1.3"/><rect x="1827.7" y="58" width="9.5" height="9.5" fill="#3f6432" stroke="#35552b" stroke-width="1.2"/><path d="M1830.5 58V56h10v10H1837.2" fill="none" stroke="#35552b" stroke-width="1.2"/><path d="M1885 56L1897.5 68M1897.5 56L1885 68" stroke="#35552b" stroke-width="1.2"/><path d="M17.5 121.5V92.5H51.5" fill="none" stroke="#ababab" stroke-width="1.2"/><rect x="20.5" y="94.5" width="33" height="29" fill="#fbfbfb" stroke="#ababab" stroke-width="1.2"/><rect x="20" y="94" width="34" height="5.5" fill="#ababab"/><path d="M25.5 99.5V123.5" stroke="#c6c6c6" stroke-width="1"/><path d="M30.5 99.5V123.5" stroke="#c6c6c6" stroke-width="1"/><path d="M36.5 99.5V123.5" stroke="#c6c6c6" stroke-width="1"/><path d="M42.5 99.5V123.5" stroke="#c6c6c6" stroke-width="1"/><path d="M48.5 99.5V123.5" stroke="#c6c6c6" stroke-width="1"/><path d="M25.5 99.5V123.5" stroke="#ababab" stroke-width="1"/><path d="M20.5 104.5H25.5" stroke="#c6c6c6" stroke-width="1"/><path d="M20.5 109.5H25.5" stroke="#c6c6c6" stroke-width="1"/><path d="M20.5 114.5H25.5" stroke="#c6c6c6" stroke-width="1"/><path d="M20.5 119.5H25.5" stroke="#c6c6c6" stroke-width="1"/><path d="M29.8 105V102.7H49.3V105" fill="none" stroke="#ababab" stroke-width="1.3"/><rect x="29.3" y="106.3" width="12.5" height="4.3" fill="#ababab"/><rect x="38.3" y="114.3" width="12.5" height="4.3" fill="#ababab"/><path d="M52.0 158.75h7l-3.5 3.5z" fill="#b8b8b8"/><rect x="94" y="94.6" width="26.7" height="30" fill="#e5c48d"/><rect x="99" y="92.8" width="17.2" height="5" fill="#6d6d6d"/><rect x="104.4" y="90" width="6" height="5" fill="#6d6d6d"/><rect x="106" y="91.5" width="2.8" height="2.5" fill="#f3f3f3"/><path d="M113.5 108.3H123.2L127.3 112.4V127.1H113.5Z" fill="#fff" stroke="#6b6b6b" stroke-width="1"/><path d="M123 108.3V112.6H127.3" fill="none" stroke="#6b6b6b" stroke-width="1"/><path d="M104.5 158.7h7l-3.5 3.6z" fill="#555"/><path d="M141.5 89.5L151 101.5M152.5 89.5L143 101.5" stroke="#555" stroke-width="1.4"/><circle cx="143" cy="103.5" r="3" fill="none" stroke="#666" stroke-width="1.2"/><circle cx="151.5" cy="103.5" r="3" fill="none" stroke="#5a8fa8" stroke-width="1.2"/><path d="M139.5 118.3H146l2.7 2.7V130.5H139.5Z" fill="#fff" stroke="#555" stroke-width="1"/><path d="M141 123h5M141 125.5h5M141 128h5" stroke="#555" stroke-width="0.9"/><path d="M146.5 123.3H153l2.7 2.7V135.5H146.5Z" fill="#fff" stroke="#555" stroke-width="1"/><path d="M148 127h6M148 129.5h6M148 132h6" stroke="#555" stroke-width="0.9"/><path d="M208.5 125.60000000000001h7l-3.5 3.6z" fill="#555"/><path d="M151 150.5l4 -1.5 1.5 1.5 -1.5 4 z" fill="#bdbdbd"/><path d="M149 152.5l4 4 -6 6 -6 -6z" fill="#c4c4c4"/><path d="M148 153.5l3 3" stroke="#a8a8a8" stroke-width="1.5"/><rect x="287.5" y="94.5" width="178" height="28" fill="#e6e6e6" stroke="#c6c6c6" stroke-width="1"/><path d="M405.5 95V122" stroke="#c6c6c6" stroke-width="1"/><path d="M393.0 106.8h6l-3.0 3z" fill="#b6b6b6"/><path d="M454.0 106.8h6l-3.0 3z" fill="#b6b6b6"/><text x="295" y="153" font-family="Liberation Sans" font-weight="bold" font-size="17" fill="#a4a4a4">B</text><text x="324" y="153" font-family="Liberation Serif" font-weight="bold" font-style="italic" font-size="17.5" fill="#a4a4a4">I</text><text x="350" y="151.5" font-family="Liberation Sans" font-weight="bold" font-size="15" fill="#a4a4a4">U</text><path d="M350.8 154.5h11" stroke="#a4a4a4" stroke-width="1.3"/><path d="M375.5 134V160.5" stroke="#c8c8c8" stroke-width="1"/><path d="M387.1 146.2L395.1 140.3L400 146.5L393.5 152.6Z" fill="none" stroke="#a4a4a4" stroke-width="1.2"/><path d="M391.5 143.5V138.5Q393.5 136 395.3 138.5V143.5" fill="none" stroke="#a4a4a4" stroke-width="1.1"/><path d="M396.5 141Q402.5 143 400.8 151.5Q400.5 147 398.5 145Z" fill="#a4a4a4"/><path d="M412.0 146.1h6l-3.0 3z" fill="#b6b6b6"/><text x="430.2" y="150.7" font-family="Liberation Sans" font-weight="bold" font-size="17.5" fill="#9c9c9c">A</text><path d="M455.0 146.1h6l-3.0 3z" fill="#b6b6b6"/><path d="M461.5 181.5h6v6M462 182l6 6" fill="none" stroke="#b4b4b4" stroke-width="1"/><path d="M461.5 181.5v7h7" fill="none" stroke="#c8c8c8" stroke-width="1"/><rect x="491" y="99" width="18" height="7.6" rx="1" fill="#ababab"/><text x="500" y="115" text-anchor="middle" font-family="Liberation Sans" font-size="7.5" fill="#8e8e8e">0%</text><rect x="519" y="99" width="18" height="7.6" rx="1" fill="#ababab"/><rect x="519" y="102.1" width="4.5" height="1.8" fill="#707174"/><text x="528" y="115" text-anchor="middle" font-family="Liberation Sans" font-size="7.5" fill="#8e8e8e">25%</text><rect x="547" y="99" width="18" height="7.6" rx="1" fill="#ababab"/><rect x="547" y="102.1" width="9.0" height="1.8" fill="#707174"/><text x="556" y="115" text-anchor="middle" font-family="Liberation Sans" font-size="7.5" fill="#8e8e8e">50%</text><rect x="575" y="99" width="18" height="7.6" rx="1" fill="#ababab"/><rect x="575" y="102.1" width="13.5" height="1.8" fill="#707174"/><text x="584" y="115" text-anchor="middle" font-family="Liberation Sans" font-size="7.5" fill="#8e8e8e">75%</text><rect x="603" y="99" width="18" height="7.6" rx="1" fill="#ababab"/><rect x="603" y="102.1" width="18" height="1.8" fill="#707174"/><text x="612" y="115" text-anchor="middle" font-family="Liberation Sans" font-size="7.5" fill="#8e8e8e">100%</text><path d="M491 138.5h13M491 141.5h13M491 144.5h9" stroke="#ababab" stroke-width="1.2"/><path d="M510 150.5H498M501 145.5l-5 5 5 5" fill="none" stroke="#ababab" stroke-width="3"/><path d="M524 138.5h13M524 141.5h13M528 144.5h9" stroke="#ababab" stroke-width="1.2"/><path d="M518 150.5H530M527 145.5l5 5 -5 5" fill="none" stroke="#ababab" stroke-width="3"/><path d="M546.5 134v27M583.5 134v27" stroke="#d2d2d2" stroke-width="1"/><rect x="557" y="144" width="6" height="5" fill="#ababab"/><rect x="566" y="144" width="6" height="5" fill="#ababab"/><path d="M564.5 137.5v4M564.5 150.5v5M561 139l1.5 2.5M568 139l-1.5 2.5M561 154.5l1.5 -2.5M568 154.5l-1.5 -2.5" stroke="#ababab" stroke-width="0.9"/><path d="M599 143.5h-2.5a3.5 3.5 0 0 0 0 7h5a3.5 3.5 0 0 0 3.5 -3.5" fill="none" stroke="#ababab" stroke-width="2.4"/><path d="M605 150h2.5a3.5 3.5 0 0 0 0 -7h-5a3.5 3.5 0 0 0 -3.5 3.5" fill="none" stroke="#ababab" stroke-width="2.4"/><path d="M627 143.5h-2.5a3.5 3.5 0 0 0 0 7h3" fill="none" stroke="#ababab" stroke-width="2.4"/><path d="M632 150h2.5a3.5 3.5 0 0 0 0 -7h-3" fill="none" stroke="#ababab" stroke-width="2.4"/><path d="M629.5 137v4M629.5 153v4M626 138.5l1.5 2.5M633 138.5l-1.5 2.5M626 155.5l1.5 -2.5M633 155.5l-1.5 -2.5" stroke="#ababab" stroke-width="0.9"/><rect x="649" y="89" width="18" height="9.5" fill="#ababab"/><rect x="649" y="92.9" width="15" height="1.6" fill="#737476"/><path d="M663.5 88v18.5" stroke="#ababab" stroke-width="1.2"/><path d="M653.3 103h6.5M657 100l3 3 -3 3" fill="none" stroke="#ababab" stroke-width="1.5"/><path d="M655 118.5h-2.3a3.6 3.6 0 0 0 0 7.2h5a3.6 3.6 0 0 0 3.6 -3.6" fill="none" stroke="#ababab" stroke-width="2.3"/><path d="M661 125.7h2.5a3.6 3.6 0 0 0 0 -7.2h-5a3.6 3.6 0 0 0 -3.6 3.6" fill="none" stroke="#ababab" stroke-width="2.3"/><path d="M653.5 127.5l5 7.5 8 -11" fill="none" stroke="#ababab" stroke-width="2.5"/><rect x="651.8" y="152.8" width="12.8" height="5.6" rx="1" fill="none" stroke="#ababab" stroke-width="1.2"/><path d="M649 155.6h18" stroke="#ababab" stroke-width="1.2"/><path d="M776.5 96.25h7l-3.5 3.5z" fill="#b6b6b6"/><path d="M825.5 123.3L834.5 114" stroke="#999" stroke-width="1.5"/><path d="M845.3 90.5L857.7 103.4Q846 107.5 841.7 120.9L826.9 106.8Q840.5 102.5 845.3 90.5Z" fill="#bdbdbd"/><rect x="888" y="95.8" width="31" height="14.2" rx="1" fill="#ababab"/><path d="M902 114.3H915M911 107.5l7 6.8 -7 6.8" fill="none" stroke="#f3f3f3" stroke-width="5"/><path d="M903 114.3H917M911.5 108l6.5 6.3 -6.5 6.3" fill="none" stroke="#ababab" stroke-width="3"/><rect x="958" y="101" width="32" height="13" rx="1" fill="#ababab"/><path d="M985.3 104.5l11 11 -11 11 -11 -11z" fill="#d9d9d9" stroke="#f3f3f3" stroke-width="1.5"/><text x="985.3" y="121" text-anchor="middle" font-family="Liberation Sans" font-weight="bold" font-size="11" fill="#8a8a8a">?</text><rect x="1010.5" y="92.5" width="36" height="28" fill="#fafafa" stroke="#ababab" stroke-width="1.2"/><rect x="1010.0" y="92.0" width="37" height="4.5" fill="#ababab"/><path d="M1016.5 96.5V120.5" stroke="#c2c2c2" stroke-width="1"/><path d="M1022.5 96.5V120.5" stroke="#c2c2c2" stroke-width="1"/><path d="M1028.5 96.5V120.5" stroke="#c2c2c2" stroke-width="1"/><path d="M1034.5 96.5V120.5" stroke="#c2c2c2" stroke-width="1"/><path d="M1040.5 96.5V120.5" stroke="#c2c2c2" stroke-width="1"/><path d="M1010.5 102.5H1046.5" stroke="#c2c2c2" stroke-width="1"/><path d="M1010.5 108.5H1046.5" stroke="#c2c2c2" stroke-width="1"/><path d="M1010.5 114.5H1046.5" stroke="#c2c2c2" stroke-width="1"/><rect x="1016.5" y="100.5" width="5.5" height="6" fill="#ababab"/><path d="M1027 121H1044M1039 114.5l6.5 6.5 -6.5 6.5" fill="none" stroke="#f3f3f3" stroke-width="5.5"/><path d="M1027 121H1045M1039.5 115l6.2 6 -6.2 6" fill="none" stroke="#ababab" stroke-width="3.2"/><rect x="1064.5" y="93" width="30.5" height="29" fill="#fafafa" stroke="#ababab" stroke-width="1.2"/><rect x="1064.0" y="92.5" width="31.5" height="4.5" fill="#ababab"/><path d="M1070.6 97V122" stroke="#c2c2c2" stroke-width="1"/><path d="M1076.7 97V122" stroke="#c2c2c2" stroke-width="1"/><path d="M1082.8 97V122" stroke="#c2c2c2" stroke-width="1"/><path d="M1088.9 97V122" stroke="#c2c2c2" stroke-width="1"/><path d="M1064.5 103.2H1095.0" stroke="#c2c2c2" stroke-width="1"/><path d="M1064.5 109.5H1095.0" stroke="#c2c2c2" stroke-width="1"/><path d="M1064.5 115.8H1095.0" stroke="#c2c2c2" stroke-width="1"/><text x="1091.5" y="124.5" text-anchor="middle" font-family="Liberation Sans" font-weight="bold" font-size="27" fill="#f3f3f3" stroke="#f3f3f3" stroke-width="3">?</text><text x="1091.5" y="124.5" text-anchor="middle" font-family="Liberation Sans" font-weight="bold" font-size="27" fill="#ababab">?</text><path d="M972.2 158.55h7l-3.5 3.5z" fill="#b8b8b8"/><path d="M1024.5 158.55h7l-3.5 3.5z" fill="#b8b8b8"/><path d="M1076.7 158.55h7l-3.5 3.5z" fill="#b8b8b8"/><rect x="1139" y="101.7" width="31" height="14" rx="1" fill="#ababab"/><path d="M1133 98.5h18M1142 90v18" stroke="#f3f3f3" stroke-width="7.5"/><path d="M1133 98.5h18M1142 90v18" stroke="#ababab" stroke-width="5"/><path d="M1148.5 158.55h7l-3.5 3.5z" fill="#b8b8b8"/><path d="M1203.5 103.5H1228.5V113.5" fill="none" stroke="#ababab" stroke-width="2.6"/><rect x="1197.5" y="109" width="3" height="5" fill="#ababab"/><path d="M1191 98.5h18M1200 90v18" stroke="#f3f3f3" stroke-width="7.5"/><path d="M1191 98.5h18M1200 90v18" stroke="#ababab" stroke-width="5"/><path d="M1279 93.5l14.5 14 -14.5 14 -14 -14z" fill="#ababab"/><path d="M1260 96.5h18M1269 88v18" stroke="#f3f3f3" stroke-width="7.5"/><path d="M1260 96.5h18M1269 88v18" stroke="#ababab" stroke-width="5"/><path d="M1340 103.5h19v21h-19z" fill="#ababab"/><path d="M1347 98h21.5l-9.5 5.5h-19z" fill="#ababab"/><path d="M1359.5 103.5l9.5 -5.5v20.5l-9.5 6z" fill="#ababab"/><path d="M1340 103.5h19M1359.5 103.5l9.5 -5.5M1359.5 103.5v21" stroke="#f3f3f3" stroke-width="1.2"/><path d="M1335 96.5h18M1344 88v18" stroke="#f3f3f3" stroke-width="7.5"/><path d="M1335 96.5h18M1344 88v18" stroke="#ababab" stroke-width="5"/><path d="M1351.5 158.55h7l-3.5 3.5z" fill="#b8b8b8"/><rect x="1439.5" y="92.5" width="35.5" height="30" fill="#fafafa" stroke="#ababab" stroke-width="1.3"/><rect x="1439" y="92" width="36.5" height="5.5" fill="#ababab"/><rect x="1442" y="106.5" width="12.5" height="4.5" rx="2" fill="#ababab"/><path d="M1457.5 100v20" stroke="#ababab" stroke-width="1.2"/><path d="M1460 102.5h12" stroke="#c4c4c4" stroke-width="1"/><path d="M1460 105.5h12" stroke="#c4c4c4" stroke-width="1"/><path d="M1460 108.5h12" stroke="#c4c4c4" stroke-width="1"/><path d="M1460 111.5h12" stroke="#c4c4c4" stroke-width="1"/><path d="M1460 114.5h12" stroke="#c4c4c4" stroke-width="1"/><path d="M1460 117.5h12" stroke="#c4c4c4" stroke-width="1"/><path d="M1504 89.3h17.7v17.7h-13l-4.7 -4.7z" fill="#d2d2d2"/><path d="M1504 102.3h4.7v4.7z" fill="#bcbcbc"/><rect x="1504.5" y="118.8" width="17" height="15.5" fill="#fafafa" stroke="#ababab" stroke-width="1.2"/><rect x="1504" y="118.3" width="18" height="3" fill="#ababab"/><path d="M1506.5 124.5h3M1511.5 124.5h8M1506.5 127.5h3M1511.5 127.5h8M1506.5 130.5h3M1511.5 130.5h3M1516 130.5h3" stroke="#c2c2c2" stroke-width="1.1"/><path d="M1504 147.5h18M1504 147.5v10M1522 147.5v8" fill="none" stroke="#ababab" stroke-width="1.2" stroke-dasharray="2.5 1.5"/><path d="M1506 157.5h10M1511 152.5v10" stroke="#ababab" stroke-width="2"/><rect x="1512" y="159" width="10" height="6" rx="1" fill="#ababab"/><rect x="1674" y="100" width="31" height="14" fill="#ababab"/><path d="M1690.5 103.5v19l4.5 -4.5 3 6.5 3 -1.5 -3 -6.5h6z" fill="#f6f6f6" stroke="#9c9c9c" stroke-width="1.1"/><circle cx="1731.5" cy="95.8" r="5.8" fill="none" stroke="#ababab" stroke-width="1.8"/><path d="M1727.5 100.2L1721 106.5" stroke="#ababab" stroke-width="2.4"/><path d="M1783.5 96.25h7l-3.5 3.5z" fill="#b8b8b8"/><path d="M1729 121l6.5 -1.5 1.5 1.5 -1.5 6.5 -7 7 -6.5 -6.5z" fill="#ababab"/><path d="M1725 124.5l6.5 6.5" stroke="#f3f3f3" stroke-width="1"/><path d="M1780.5 125.75h7l-3.5 3.5z" fill="#b8b8b8"/><rect x="1720.5" y="147.5" width="16" height="17" fill="#fafafa" stroke="#ababab" stroke-width="1.2"/><rect x="1720" y="147" width="17" height="2.5" fill="#ababab"/><path d="M1728.5 151.5v9M1724.5 157l4 4 4 -4" fill="none" stroke="#ababab" stroke-width="2.2"/><path d="M1765.5 154.75h7l-3.5 3.5z" fill="#b8b8b8"/><path d="M1896.5 190L1903 184.5" stroke="#333" stroke-width="1.3"/></svg>
<div class="t" style="left:23.6px;top:54.0px;font-weight:normal;font-size:15px;line-height:15px;color:#eef5ea;letter-spacing:0.009px;">File</div>
<div class="t" style="left:87.6px;top:54.0px;font-weight:normal;font-size:15px;line-height:15px;color:#3d5c38;letter-spacing:-0.881px;">Task</div>
<div class="t" style="left:140.6px;top:54.0px;font-weight:normal;font-size:15px;line-height:15px;color:#eef5ea;letter-spacing:-0.429px;">Resource</div>
<div class="t" style="left:227.6px;top:54.0px;font-weight:normal;font-size:15px;line-height:15px;color:#eef5ea;letter-spacing:0.034px;">Report</div>
<div class="t" style="left:299.6px;top:54.0px;font-weight:normal;font-size:15px;line-height:15px;color:#eef5ea;letter-spacing:0.085px;">Project</div>
<div class="t" style="left:372.6px;top:54.0px;font-weight:normal;font-size:15px;line-height:15px;color:#eef5ea;letter-spacing:0.317px;">View</div>
<div class="t" style="left:431.6px;top:54.0px;font-weight:normal;font-size:15px;line-height:15px;color:#eef5ea;letter-spacing:0.780px;">Help</div>
<div class="t" style="left:487.6px;top:13.6px;font-weight:normal;font-size:13px;line-height:13px;color:#e6efe2;letter-spacing:0.049px;">Gantt Chart Tools</div>
<div class="t" style="left:512.6px;top:54.3px;font-weight:normal;font-size:15px;line-height:15px;color:#eef5ea;letter-spacing:0.137px;">Format</div>
<div class="t" style="left:645.6px;top:54.3px;font-weight:normal;font-size:15px;line-height:15px;color:#eef5ea;letter-spacing:0.157px;">Tell me what you want to do</div>
<div class="t" style="left:832.1px;top:11.7px;font-weight:normal;font-size:15px;line-height:15px;color:#eef5ea;letter-spacing:-0.260px;">Product Launch</div>
<div class="t" style="left:941.6px;top:11.7px;font-weight:normal;font-size:15px;line-height:15px;color:#eef5ea;letter-spacing:0.000px;">-</div>
<div class="t" style="left:955.2px;top:11.7px;font-weight:normal;font-size:15px;line-height:15px;color:#eef5ea;letter-spacing:-0.185px;">Project Professional</div>
<div class="t" style="left:20.0px;top:178.7px;font-weight:normal;font-size:13px;line-height:13px;color:#262626;letter-spacing:-0.051px;">View</div>
<div class="t" style="left:143.2px;top:178.7px;font-weight:normal;font-size:13px;line-height:13px;color:#262626;letter-spacing:0.305px;">Clipboard</div>
<div class="t" style="left:351.8px;top:178.8px;font-weight:normal;font-size:13px;line-height:13px;color:#262626;letter-spacing:-0.005px;">Font</div>
<div class="t" style="left:609.0px;top:178.7px;font-weight:normal;font-size:13px;line-height:13px;color:#262626;letter-spacing:-0.260px;">Schedule</div>
<div class="t" style="left:940.6px;top:178.7px;font-weight:normal;font-size:13px;line-height:13px;color:#262626;letter-spacing:-0.609px;">Tasks</div>
<div class="t" style="left:1243.1px;top:178.7px;font-weight:normal;font-size:13px;line-height:13px;color:#262626;letter-spacing:-0.003px;">Insert</div>
<div class="t" style="left:1497.0px;top:178.4px;font-weight:normal;font-size:13px;line-height:13px;color:#262626;letter-spacing:0.117px;">Properties</div>
<div class="t" style="left:1707.1px;top:178.2px;font-weight:normal;font-size:13px;line-height:13px;color:#262626;letter-spacing:0.058px;">Editing</div>
<div class="t" style="left:17.0px;top:132.5px;font-weight:normal;font-size:15px;line-height:15px;color:#a8a8a8;letter-spacing:-0.047px;">Gantt</div>
<div class="t" style="left:12.3px;top:152.4px;font-weight:normal;font-size:15px;line-height:15px;color:#a8a8a8;letter-spacing:-0.447px;">Chart</div>
<div class="t" style="left:90.2px;top:132.5px;font-weight:normal;font-size:15px;line-height:15px;color:#262626;letter-spacing:-1.090px;">Paste</div>
<div class="t" style="left:160.6px;top:90.6px;font-weight:normal;font-size:15px;line-height:15px;color:#262626;letter-spacing:-0.072px;">Cut</div>
<div class="t" style="left:160.6px;top:119.3px;font-weight:normal;font-size:15px;line-height:15px;color:#262626;letter-spacing:0.056px;">Copy</div>
<div class="t" style="left:161.0px;top:148.7px;font-weight:normal;font-size:15px;line-height:15px;color:#a8a8a8;letter-spacing:-0.208px;">Format Painter</div>
<div class="t" style="left:407.6px;top:100.4px;font-weight:normal;font-size:15px;line-height:15px;color:#b4b4b4;letter-spacing:-0.878px;">11</div>
<div class="t" style="left:671.1px;top:90.4px;font-weight:normal;font-size:15px;line-height:15px;color:#a8a8a8;letter-spacing:-0.144px;">Mark on Track</div>
<div class="t" style="left:671.1px;top:119.0px;font-weight:normal;font-size:15px;line-height:15px;color:#a8a8a8;letter-spacing:-0.485px;">Respect Links</div>
<div class="t" style="left:671.1px;top:148.6px;font-weight:normal;font-size:15px;line-height:15px;color:#a8a8a8;letter-spacing:-0.013px;">Inactivate</div>
<div class="t" style="left:810.1px;top:133.0px;font-weight:normal;font-size:15px;line-height:15px;color:#a8a8a8;letter-spacing:0.096px;">Manually</div>
<div class="t" style="left:810.1px;top:153.0px;font-weight:normal;font-size:15px;line-height:15px;color:#a8a8a8;letter-spacing:-0.337px;">Schedule</div>
<div class="t" style="left:888.6px;top:133.0px;font-weight:normal;font-size:15px;line-height:15px;color:#a8a8a8;letter-spacing:0.647px;">Auto</div>
<div class="t" style="left:875.1px;top:153.0px;font-weight:normal;font-size:15px;line-height:15px;color:#a8a8a8;letter-spacing:-0.323px;">Schedule</div>
<div class="t" style="left:950.6px;top:133.0px;font-weight:normal;font-size:15px;line-height:15px;color:#a8a8a8;letter-spacing:-0.029px;">Inspect</div>
<div class="t" style="left:1007.6px;top:133.0px;font-weight:normal;font-size:15px;line-height:15px;color:#a8a8a8;letter-spacing:0.404px;">Move</div>
<div class="t" style="left:1059.1px;top:133.0px;font-weight:normal;font-size:15px;line-height:15px;color:#a8a8a8;letter-spacing:0.590px;">Mode</div>
<div class="t" style="left:1137.2px;top:133.0px;font-weight:normal;font-size:15px;line-height:15px;color:#a8a8a8;letter-spacing:-0.915px;">Task</div>
<div class="t" style="left:1178.9px;top:133.0px;font-weight:normal;font-size:15px;line-height:15px;color:#a8a8a8;letter-spacing:-0.215px;">Summary</div>
<div class="t" style="left:1245.6px;top:133.0px;font-weight:normal;font-size:15px;line-height:15px;color:#a8a8a8;letter-spacing:0.200px;">Milestone</div>
<div class="t" style="left:1316.1px;top:133.0px;font-weight:normal;font-size:15px;line-height:15px;color:#a8a8a8;letter-spacing:0.125px;">Deliverable</div>
<div class="t" style="left:1417.1px;top:132.6px;font-weight:normal;font-size:15px;line-height:15px;color:#a8a8a8;letter-spacing:0.305px;">Information</div>
<div class="t" style="left:1526.0px;top:91.0px;font-weight:normal;font-size:15px;line-height:15px;color:#a8a8a8;letter-spacing:0.078px;">Notes</div>
<div class="t" style="left:1526.0px;top:119.6px;font-weight:normal;font-size:15px;line-height:15px;color:#a8a8a8;letter-spacing:0.157px;">Details</div>
<div class="t" style="left:1526.0px;top:148.8px;font-weight:normal;font-size:15px;line-height:15px;color:#a8a8a8;letter-spacing:0.301px;">Add to Timeline</div>
<div class="t" style="left:1669.3px;top:132.5px;font-weight:normal;font-size:15px;line-height:15px;color:#a8a8a8;letter-spacing:-0.123px;">Scroll</div>
<div class="t" style="left:1665.2px;top:152.3px;font-weight:normal;font-size:15px;line-height:15px;color:#a8a8a8;letter-spacing:-0.175px;">to Task</div>
<div class="t" style="left:1742.1px;top:90.5px;font-weight:normal;font-size:15px;line-height:15px;color:#a8a8a8;letter-spacing:-0.496px;">Find</div>
<div class="t" style="left:1742.1px;top:119.5px;font-weight:normal;font-size:15px;line-height:15px;color:#a8a8a8;letter-spacing:-0.365px;">Clear</div>
<div class="t" style="left:1742.1px;top:148.8px;font-weight:normal;font-size:15px;line-height:15px;color:#a8a8a8;letter-spacing:0.076px;">Fill</div>
<div class="t" style="left:942.6px;top:201.6px;font-weight:normal;font-size:12px;line-height:12px;color:#666666;letter-spacing:0.764px;">08 Mar &#x27;21</div>
<div class="t" style="left:1117.6px;top:201.6px;font-weight:normal;font-size:12px;line-height:12px;color:#666666;letter-spacing:0.764px;">15 Mar &#x27;21</div>
<div class="t" style="left:1292.6px;top:201.6px;font-weight:normal;font-size:12px;line-height:12px;color:#666666;letter-spacing:0.764px;">22 Mar &#x27;21</div>
<div class="t" style="left:1467.6px;top:201.6px;font-weight:normal;font-size:12px;line-height:12px;color:#666666;letter-spacing:0.764px;">29 Mar &#x27;21</div>
<div class="t" style="left:1642.6px;top:201.6px;font-weight:normal;font-size:12px;line-height:12px;color:#666666;letter-spacing:0.781px;">05 Apr &#x27;21</div>
<div class="t" style="left:1817.6px;top:201.6px;font-weight:normal;font-size:12px;line-height:12px;color:#666666;letter-spacing:0.781px;">12 Apr &#x27;21</div>
<div class="t" style="left:134.1px;top:202.8px;font-weight:normal;font-size:15px;line-height:15px;color:#6b6b6b;letter-spacing:-0.315px;">Task</div>
<div class="t" style="left:134.1px;top:222.7px;font-weight:normal;font-size:15px;line-height:15px;color:#6b6b6b;letter-spacing:0.590px;">Mode</div>
<div class="t" style="left:209.3px;top:219.5px;font-weight:normal;font-size:15px;line-height:15px;color:#6b6b6b;letter-spacing:-0.254px;">Task Name</div>
<div class="t" style="left:404.1px;top:219.6px;font-weight:bold;font-size:15px;line-height:15px;color:#4a7a40;letter-spacing:0.104px;">Duration</div>
<div class="t" style="left:510.8px;top:219.6px;font-weight:normal;font-size:15px;line-height:15px;color:#6b6b6b;letter-spacing:0.078px;">Start</div>
<div class="t" style="left:617.8px;top:219.6px;font-weight:normal;font-size:15px;line-height:15px;color:#6b6b6b;letter-spacing:-0.503px;">Finish</div>
<div class="t" style="left:725.1px;top:219.6px;font-weight:normal;font-size:15px;line-height:15px;color:#6b6b6b;letter-spacing:-0.547px;">Predecessors</div>
<div class="t" style="left:50.6px;top:246.0px;font-weight:normal;font-size:15px;line-height:15px;color:#666666;letter-spacing:0.000px;">1</div>
<div class="t" style="left:220.2px;top:246.0px;font-weight:bold;font-size:15px;line-height:15px;color:#0d0d0d;letter-spacing:0.558px;width:175.9px;overflow:hidden;padding-bottom:8px;">Market Research</div>
<div class="t" style="left:401.2px;top:246.0px;font-weight:bold;font-size:15px;line-height:15px;color:#0d0d0d;letter-spacing:0.229px;">12 days</div>
<div class="t" style="left:508.2px;top:246.0px;font-weight:bold;font-size:15px;line-height:15px;color:#0d0d0d;letter-spacing:0.849px;">Mon 01.03.21</div>
<div class="t" style="left:615.2px;top:246.0px;font-weight:bold;font-size:15px;line-height:15px;color:#0d0d0d;letter-spacing:0.681px;">Tue 16.03.21</div>
<div class="t" style="left:50.6px;top:274.0px;font-weight:normal;font-size:15px;line-height:15px;color:#666666;letter-spacing:0.000px;">2</div>
<div class="t" style="left:236.1px;top:274.0px;font-weight:normal;font-size:15px;line-height:15px;color:#0d0d0d;letter-spacing:0.672px;width:160.0px;overflow:hidden;padding-bottom:8px;">Target Markets</div>
<div class="t" style="left:401.2px;top:274.0px;font-weight:normal;font-size:15px;line-height:15px;color:#0d0d0d;letter-spacing:0.221px;">7 days</div>
<div class="t" style="left:508.2px;top:274.0px;font-weight:normal;font-size:15px;line-height:15px;color:#0d0d0d;letter-spacing:1.043px;">Mon 01.03.21</div>
<div class="t" style="left:615.2px;top:274.0px;font-weight:normal;font-size:15px;line-height:15px;color:#0d0d0d;letter-spacing:0.804px;">Wed 10.03.21</div>
<div class="t" style="left:50.6px;top:302.0px;font-weight:normal;font-size:15px;line-height:15px;color:#666666;letter-spacing:0.000px;">3</div>
<div class="t" style="left:236.1px;top:302.0px;font-weight:normal;font-size:15px;line-height:15px;color:#0d0d0d;letter-spacing:0.694px;width:160.0px;overflow:hidden;padding-bottom:8px;">Target Customers</div>
<div class="t" style="left:401.2px;top:302.0px;font-weight:normal;font-size:15px;line-height:15px;color:#0d0d0d;letter-spacing:0.221px;">9 days</div>
<div class="t" style="left:508.2px;top:302.0px;font-weight:normal;font-size:15px;line-height:15px;color:#0d0d0d;letter-spacing:1.043px;">Mon 01.03.21</div>
<div class="t" style="left:615.2px;top:302.0px;font-weight:normal;font-size:15px;line-height:15px;color:#0d0d0d;letter-spacing:0.691px;">Fri 12.03.21</div>
<div class="t" style="left:50.6px;top:330.0px;font-weight:normal;font-size:15px;line-height:15px;color:#666666;letter-spacing:0.000px;">4</div>
<div class="t" style="left:236.1px;top:330.0px;font-weight:normal;font-size:15px;line-height:15px;color:#0d0d0d;letter-spacing:0.691px;width:160.0px;overflow:hidden;padding-bottom:8px;">Competitors Research</div>
<div class="t" style="left:401.2px;top:330.0px;font-weight:normal;font-size:15px;line-height:15px;color:#0d0d0d;letter-spacing:0.219px;">10 days</div>
<div class="t" style="left:508.2px;top:330.0px;font-weight:normal;font-size:15px;line-height:15px;color:#0d0d0d;letter-spacing:1.058px;">Wed 03.03.21</div>
<div class="t" style="left:615.2px;top:330.0px;font-weight:normal;font-size:15px;line-height:15px;color:#0d0d0d;letter-spacing:0.759px;">Tue 16.03.21</div>
<div class="t" style="left:50.6px;top:358.0px;font-weight:normal;font-size:15px;line-height:15px;color:#666666;letter-spacing:0.000px;">5</div>
<div class="t" style="left:236.1px;top:358.0px;font-weight:normal;font-size:15px;line-height:15px;color:#0d0d0d;letter-spacing:0.651px;width:160.0px;overflow:hidden;padding-bottom:8px;">Similar Products Research</div>
<div class="t" style="left:401.2px;top:358.0px;font-weight:normal;font-size:15px;line-height:15px;color:#0d0d0d;letter-spacing:0.219px;">12 days</div>
<div class="t" style="left:508.2px;top:358.0px;font-weight:normal;font-size:15px;line-height:15px;color:#0d0d0d;letter-spacing:1.043px;">Mon 01.03.21</div>
<div class="t" style="left:615.2px;top:358.0px;font-weight:normal;font-size:15px;line-height:15px;color:#0d0d0d;letter-spacing:0.759px;">Tue 16.03.21</div>
<div class="t" style="left:50.6px;top:386.0px;font-weight:normal;font-size:15px;line-height:15px;color:#666666;letter-spacing:0.000px;">6</div>
<div class="t" style="left:220.2px;top:386.0px;font-weight:bold;font-size:15px;line-height:15px;color:#0d0d0d;letter-spacing:0.561px;width:175.9px;overflow:hidden;padding-bottom:8px;">Product Concept</div>
<div class="t" style="left:401.2px;top:386.0px;font-weight:bold;font-size:15px;line-height:15px;color:#0d0d0d;letter-spacing:0.229px;">15 days</div>
<div class="t" style="left:508.2px;top:386.0px;font-weight:bold;font-size:15px;line-height:15px;color:#0d0d0d;letter-spacing:0.854px;">Wed 17.03.21</div>
<div class="t" style="left:615.2px;top:386.0px;font-weight:bold;font-size:15px;line-height:15px;color:#0d0d0d;letter-spacing:0.681px;">Tue 06.04.21</div>
<div class="t" style="left:50.6px;top:414.0px;font-weight:normal;font-size:15px;line-height:15px;color:#666666;letter-spacing:0.000px;">7</div>
<div class="t" style="left:236.1px;top:414.0px;font-weight:normal;font-size:15px;line-height:15px;color:#0d0d0d;letter-spacing:0.759px;width:160.0px;overflow:hidden;padding-bottom:8px;">Stage 1</div>
<div class="t" style="left:401.2px;top:414.0px;font-weight:normal;font-size:15px;line-height:15px;color:#0d0d0d;letter-spacing:0.219px;">10 days</div>
<div class="t" style="left:50.6px;top:442.0px;font-weight:normal;font-size:15px;line-height:15px;color:#666666;letter-spacing:0.000px;">8</div>
<div class="t" style="left:236.1px;top:442.0px;font-weight:normal;font-size:15px;line-height:15px;color:#0d0d0d;letter-spacing:0.759px;width:160.0px;overflow:hidden;padding-bottom:8px;">Stage 2</div>
<div class="t" style="left:401.2px;top:442.0px;font-weight:normal;font-size:15px;line-height:15px;color:#0d0d0d;letter-spacing:0.221px;">5 days</div>
<div class="t" style="left:50.6px;top:470.0px;font-weight:normal;font-size:15px;line-height:15px;color:#666666;letter-spacing:0.000px;">9</div>
<div class="t" style="left:220.2px;top:470.0px;font-weight:bold;font-size:15px;line-height:15px;color:#0d0d0d;letter-spacing:0.555px;width:175.9px;overflow:hidden;padding-bottom:8px;">Features&amp;Functions</div>
<div class="t" style="left:401.2px;top:470.0px;font-weight:bold;font-size:15px;line-height:15px;color:#0d0d0d;letter-spacing:0.234px;">9 days</div>
<div class="t" style="left:508.2px;top:470.0px;font-weight:bold;font-size:15px;line-height:15px;color:#0d0d0d;letter-spacing:0.854px;">Wed 17.03.21</div>
<div class="t" style="left:615.2px;top:470.0px;font-weight:bold;font-size:15px;line-height:15px;color:#0d0d0d;letter-spacing:0.722px;">Mon 29.03.21</div>
<div class="t" style="left:46.1px;top:498.0px;font-weight:normal;font-size:15px;line-height:15px;color:#666666;letter-spacing:-0.488px;">10</div>
<div class="t" style="left:236.1px;top:498.0px;font-weight:normal;font-size:15px;line-height:15px;color:#0d0d0d;letter-spacing:0.652px;width:160.0px;overflow:hidden;padding-bottom:8px;">Required Materials</div>
<div class="t" style="left:401.2px;top:498.0px;font-weight:normal;font-size:15px;line-height:15px;color:#0d0d0d;letter-spacing:0.221px;">5 days</div>
<div class="t" style="left:46.1px;top:526.0px;font-weight:normal;font-size:15px;line-height:15px;color:#666666;letter-spacing:0.622px;">11</div>
<div class="t" style="left:236.1px;top:526.0px;font-weight:normal;font-size:15px;line-height:15px;color:#0d0d0d;letter-spacing:0.719px;width:160.0px;overflow:hidden;padding-bottom:8px;">Required Methods</div>
<div class="t" style="left:401.2px;top:526.0px;font-weight:normal;font-size:15px;line-height:15px;color:#0d0d0d;letter-spacing:0.221px;">4 days</div>
<div class="t" style="left:46.1px;top:554.0px;font-weight:normal;font-size:15px;line-height:15px;color:#666666;letter-spacing:-0.488px;">12</div>
<div class="t" style="left:220.2px;top:554.0px;font-weight:bold;font-size:15px;line-height:15px;color:#0d0d0d;letter-spacing:0.672px;width:175.9px;overflow:hidden;padding-bottom:8px;">Budget</div>
<div class="t" style="left:401.2px;top:554.0px;font-weight:bold;font-size:15px;line-height:15px;color:#0d0d0d;letter-spacing:0.226px;">11 days</div>
<div class="t" style="left:508.2px;top:554.0px;font-weight:bold;font-size:15px;line-height:15px;color:#0d0d0d;letter-spacing:0.743px;">Fri 19.03.21</div>
<div class="t" style="left:615.2px;top:554.0px;font-weight:bold;font-size:15px;line-height:15px;color:#0d0d0d;letter-spacing:0.722px;">Mon 05.04.21</div>
<div class="t" style="left:46.1px;top:582.0px;font-weight:normal;font-size:15px;line-height:15px;color:#666666;letter-spacing:-0.488px;">13</div>
<div class="t" style="left:236.1px;top:582.0px;font-weight:normal;font-size:15px;line-height:15px;color:#0d0d0d;letter-spacing:0.689px;width:160.0px;overflow:hidden;padding-bottom:8px;">Work with Sponsors</div>
<div class="t" style="left:401.2px;top:582.0px;font-weight:normal;font-size:15px;line-height:15px;color:#0d0d0d;letter-spacing:0.214px;">11 days</div>
<div class="t" style="left:46.1px;top:610.0px;font-weight:normal;font-size:15px;line-height:15px;color:#666666;letter-spacing:-0.488px;">14</div>
<div class="t" style="left:236.1px;top:610.0px;font-weight:normal;font-size:15px;line-height:15px;color:#0d0d0d;letter-spacing:0.648px;width:160.0px;overflow:hidden;padding-bottom:8px;">Work with Contractors</div>
<div class="t" style="left:401.2px;top:610.0px;font-weight:normal;font-size:15px;line-height:15px;color:#0d0d0d;letter-spacing:0.214px;">11 days</div>
<div class="t" style="left:46.1px;top:638.0px;font-weight:normal;font-size:15px;line-height:15px;color:#666666;letter-spacing:-0.488px;">15</div>
<div class="t" style="left:236.1px;top:638.0px;font-weight:normal;font-size:15px;line-height:15px;color:#0d0d0d;letter-spacing:0.638px;width:160.0px;overflow:hidden;padding-bottom:8px;">Model Product Life Cycle</div>
<div class="t" style="left:401.2px;top:638.0px;font-weight:normal;font-size:15px;line-height:15px;color:#0d0d0d;letter-spacing:0.214px;">11 days</div>
<div class="t" style="left:46.1px;top:666.0px;font-weight:normal;font-size:15px;line-height:15px;color:#666666;letter-spacing:-0.488px;">16</div>
<div class="t" style="left:220.2px;top:666.0px;font-weight:bold;font-size:15px;line-height:15px;color:#0d0d0d;letter-spacing:0.499px;width:175.9px;overflow:hidden;padding-bottom:8px;">Pricing Strategy</div>
<div class="t" style="left:401.2px;top:666.0px;font-weight:bold;font-size:15px;line-height:15px;color:#0d0d0d;letter-spacing:0.234px;">8 days</div>
<div class="t" style="left:508.2px;top:666.0px;font-weight:bold;font-size:15px;line-height:15px;color:#0d0d0d;letter-spacing:0.743px;">Fri 19.03.21</div>
<div class="t" style="left:615.2px;top:666.0px;font-weight:bold;font-size:15px;line-height:15px;color:#0d0d0d;letter-spacing:0.681px;">Tue 30.03.21</div>
<div class="t" style="left:46.1px;top:694.0px;font-weight:normal;font-size:15px;line-height:15px;color:#666666;letter-spacing:-0.488px;">19</div>
<div class="t" style="left:220.2px;top:694.0px;font-weight:bold;font-size:15px;line-height:15px;color:#0d0d0d;letter-spacing:0.566px;width:175.9px;overflow:hidden;padding-bottom:8px;">Marketing&amp;Promotion</div>
<div class="t" style="left:46.1px;top:722.0px;font-weight:normal;font-size:15px;line-height:15px;color:#666666;letter-spacing:-0.488px;">20</div>
<div class="t" style="left:220.2px;top:722.0px;font-weight:bold;font-size:15px;line-height:15px;color:#0d0d0d;letter-spacing:0.488px;width:175.9px;overflow:hidden;padding-bottom:8px;">Sales &amp; Distribution</div>
<div class="t" style="left:401.2px;top:722.0px;font-weight:bold;font-size:15px;line-height:15px;color:#0d0d0d;letter-spacing:0.229px;">16 days</div>
<div class="t" style="left:508.2px;top:722.0px;font-weight:bold;font-size:15px;line-height:15px;color:#0d0d0d;letter-spacing:0.743px;">Fri 19.03.21</div>
<div class="t" style="left:615.2px;top:722.0px;font-weight:bold;font-size:15px;line-height:15px;color:#0d0d0d;letter-spacing:0.632px;">Fri 09.04.21</div>
<div class="t" style="left:46.1px;top:770.0px;font-weight:normal;font-size:15px;line-height:15px;color:#666666;letter-spacing:-0.488px;">21</div>
<div class="t" style="left:236.1px;top:770.0px;font-weight:normal;font-size:15px;line-height:15px;color:#0d0d0d;letter-spacing:0.759px;width:160.0px;overflow:hidden;padding-bottom:8px;">Stage 1</div>
<div class="t" style="left:401.2px;top:770.0px;font-weight:normal;font-size:15px;line-height:15px;color:#0d0d0d;letter-spacing:0.221px;">7 days</div>
<div class="t" style="left:508.2px;top:770.0px;font-weight:normal;font-size:15px;line-height:15px;color:#0d0d0d;letter-spacing:0.910px;">Fri 19.03.21</div>
<div class="t" style="left:615.2px;top:770.0px;font-weight:normal;font-size:15px;line-height:15px;color:#0d0d0d;letter-spacing:0.792px;">Mon 29.03.21</div>
<div class="t" style="left:46.1px;top:798.0px;font-weight:normal;font-size:15px;line-height:15px;color:#666666;letter-spacing:-0.488px;">22</div>
<div class="t" style="left:236.1px;top:798.0px;font-weight:normal;font-size:15px;line-height:15px;color:#0d0d0d;letter-spacing:0.759px;width:160.0px;overflow:hidden;padding-bottom:8px;">Stage 2</div>
<div class="t" style="left:401.2px;top:798.0px;font-weight:normal;font-size:15px;line-height:15px;color:#0d0d0d;letter-spacing:0.221px;">5 days</div>
<div class="t" style="left:508.2px;top:798.0px;font-weight:normal;font-size:15px;line-height:15px;color:#0d0d0d;letter-spacing:1.043px;">Mon 29.03.21</div>
<div class="t" style="left:615.2px;top:798.0px;font-weight:normal;font-size:15px;line-height:15px;color:#0d0d0d;letter-spacing:0.691px;">Fri 02.04.21</div>
<div class="t" style="left:46.1px;top:826.0px;font-weight:normal;font-size:15px;line-height:15px;color:#666666;letter-spacing:-0.488px;">23</div>
<div class="t" style="left:236.1px;top:826.0px;font-weight:normal;font-size:15px;line-height:15px;color:#0d0d0d;letter-spacing:0.759px;width:160.0px;overflow:hidden;padding-bottom:8px;">Stage 3</div>
<div class="t" style="left:401.2px;top:826.0px;font-weight:normal;font-size:15px;line-height:15px;color:#0d0d0d;letter-spacing:0.221px;">6 days</div>
<div class="t" style="left:508.2px;top:826.0px;font-weight:normal;font-size:15px;line-height:15px;color:#0d0d0d;letter-spacing:0.910px;">Fri 02.04.21</div>
<div class="t" style="left:615.2px;top:826.0px;font-weight:normal;font-size:15px;line-height:15px;color:#0d0d0d;letter-spacing:0.691px;">Fri 09.04.21</div>
<div class="t" style="left:45.4px;top:852.8px;font-weight:bold;font-size:15px;line-height:15px;color:#3b6e35;letter-spacing:1.012px;">24</div>
<div class="t" style="left:220.2px;top:854.0px;font-weight:normal;font-size:15px;line-height:15px;color:#0d0d0d;letter-spacing:0.807px;width:175.9px;overflow:hidden;padding-bottom:8px;">Release</div>
<div class="t" style="left:508.2px;top:854.0px;font-weight:normal;font-size:15px;line-height:15px;color:#0d0d0d;letter-spacing:1.043px;">Mon 12.04.21</div>
<div class="t" style="left:615.2px;top:854.0px;font-weight:normal;font-size:15px;line-height:15px;color:#0d0d0d;letter-spacing:0.792px;">Mon 12.04.21</div>
<div class="t" style="left:220.2px;top:744.0px;font-weight:bold;font-size:15px;line-height:15px;color:#0d0d0d;letter-spacing:0.557px;">Strategy</div>
<div class="t" style="left:401.6px;top:852.6px;font-weight:normal;font-size:15px;line-height:15px;color:#0d0d0d;letter-spacing:0.265px;">0 days</div>
<div class="t" style="left:1825.9px;top:851.0px;font-weight:bold;font-size:16px;line-height:16px;color:#111;letter-spacing:0.963px;">12.04</div>
</body></html>
